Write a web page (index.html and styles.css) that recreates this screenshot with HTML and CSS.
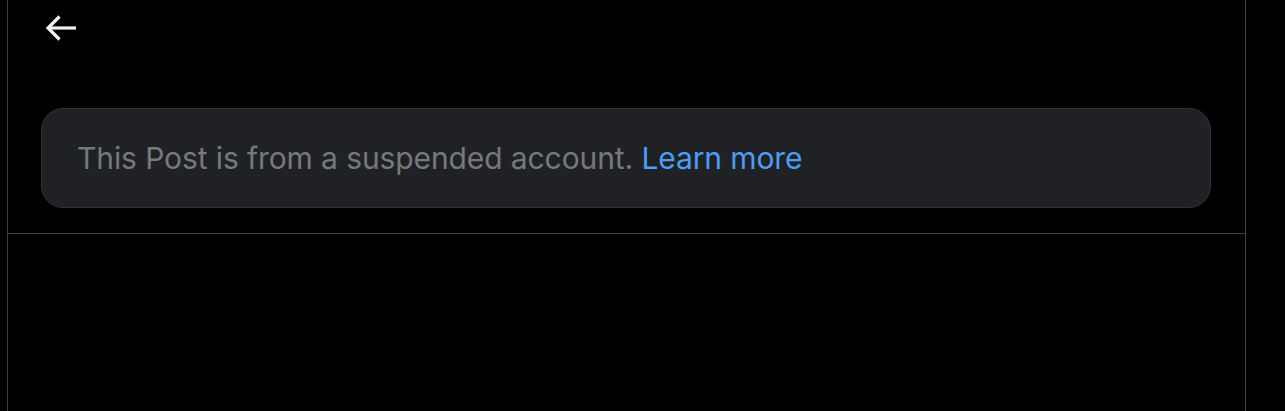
FILE: index.html
```html
<!DOCTYPE html>
<html>
<head>
<meta charset="utf-8">
<link rel="stylesheet" href="styles.css">
</head>
<body>
<main class="column">
  <header class="topbar">
    <button class="back" aria-label="Back">
      <svg width="32" height="28" viewBox="0 0 32 28" fill="none" stroke="#eff1f2" stroke-width="3.2" stroke-linecap="butt" stroke-linejoin="miter">
        <path d="M3 14H31"/>
        <path d="M14.5 2.5L3 14L14.5 25.5"/>
      </svg>
    </button>
  </header>
  <section class="notice-wrap">
    <div class="notice">
      <span class="notice-text">This Post is from a suspended account. <a class="link" href="#">Learn more</a></span>
    </div>
  </section>
  <div class="rest"></div>
</main>
</body>
</html>
```

FILE: styles.css
```css
html, body {
  margin: 0;
  padding: 0;
  background: #000;
  height: 100%;
}
body {
  font-family: Inter, "Noto Sans", "Liberation Sans", sans-serif;
}
.column {
  margin-left: 7px;
  width: 1237px;
  min-height: 411px;
  border-left: 1px solid #3e4144;
  border-right: 1px solid #3e4144;
  display: flex;
  flex-direction: column;
}
.topbar {
  height: 55px;
  display: flex;
  align-items: center;
  padding-left: 37px;
}
.back {
  background: none;
  border: 0;
  padding: 0;
  display: flex;
  cursor: pointer;
}
.notice-wrap {
  padding: 53px 34px 25px 33px;
  border-bottom: 1px solid #3e4144;
}
.notice {
  box-sizing: border-box;
  height: 100px;
  border: 1px solid #303336;
  border-radius: 22px;
  background: #202124;
  display: flex;
  align-items: center;
  padding-left: 35px;
}
.notice-text {
  font-size: 30px;
  color: #75797e;
  letter-spacing: -0.1px;
}
.link {
  color: #4a9ef5;
  text-decoration: none;
}
.rest {
  flex: 1;
}
```
